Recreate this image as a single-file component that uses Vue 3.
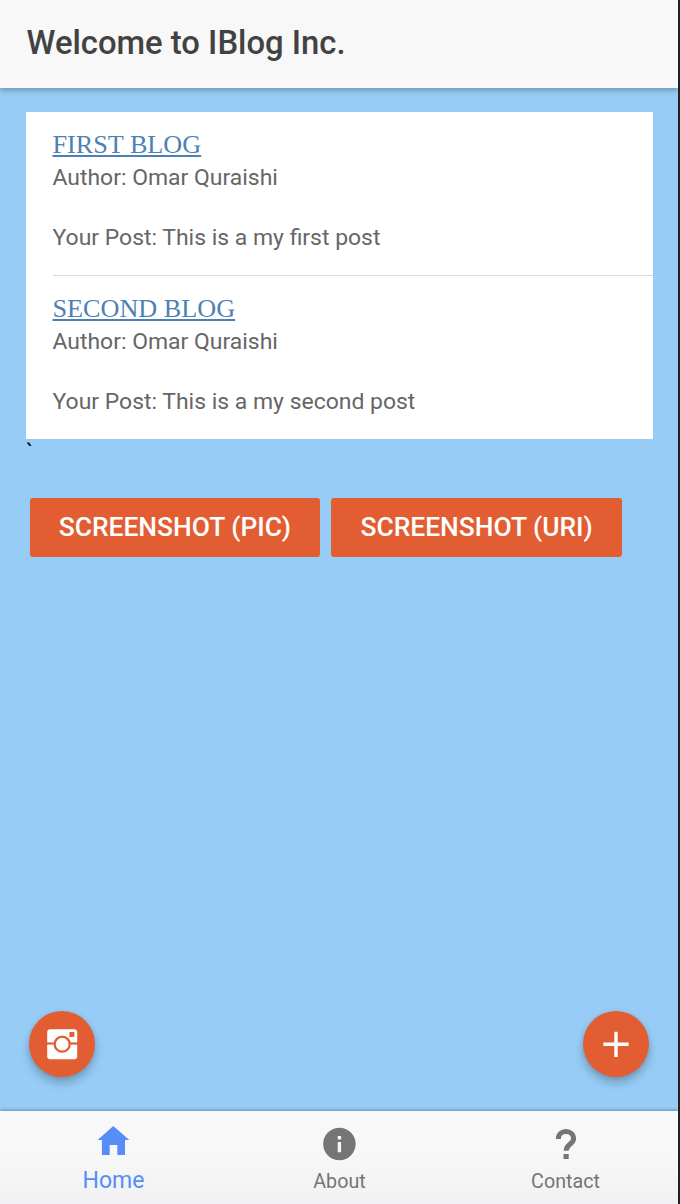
<script setup>
const posts = [
  { title: 'FIRST BLOG', author: 'Omar Quraishi', body: 'This is a my first post' },
  { title: 'SECOND BLOG', author: 'Omar Quraishi', body: 'This is a my second post' },
]
</script>

<template>
  <div class="screen">
    <header class="header">
      <h1>Welcome to IBlog Inc.</h1>
    </header>

    <main class="content">
      <div class="list">
        <article v-for="post in posts" :key="post.title" class="item">
          <div class="item-inner">
            <a class="title">{{ post.title }}</a>
            <p>Author: {{ post.author }}</p>
            <p class="body">Your Post: {{ post.body }}</p>
          </div>
        </article>
      </div>
      <div class="tick">`</div>
      <div class="buttons">
        <button class="btn">SCREENSHOT (PIC)</button>
        <button class="btn">SCREENSHOT (URI)</button>
      </div>
      <div class="fabs">
        <button class="fab" aria-label="Camera">
          <svg width="66" height="66" viewBox="0 0 66 66">
            <rect x="18.2" y="18.2" width="30" height="30" rx="3" fill="#fff" />
            <rect x="17" y="31.4" width="32" height="2.2" fill="#e25e32" />
            <circle cx="33.2" cy="33.2" r="7.5" fill="#fff" stroke="#e25e32" stroke-width="2.3" />
            <rect x="40.4" y="21" width="5" height="5" rx="0.6" fill="#e25e32" />
          </svg>
        </button>
        <button class="fab" aria-label="Add">
          <svg width="66" height="66" viewBox="0 0 66 66">
            <path d="M20.4 33.2H45.6M33 20.7V45.9" stroke="#fff" stroke-width="3.4" fill="none" />
          </svg>
        </button>
      </div>
    </main>

    <nav class="tabs">
      <a class="tab active">
        <svg width="40" height="40" viewBox="0 0 40 40">
          <path d="M19.3 5 35.3 19H31V34H23.3V24H15.7V34H7.9V19H3.6Z" fill="currentColor" />
        </svg>
        <span>Home</span>
      </a>
      <a class="tab">
        <svg width="40" height="40" viewBox="0 0 40 40">
          <circle cx="19.4" cy="23" r="16.2" fill="currentColor" />
          <path d="M17.7 15H21.1V18.5H17.7ZM17.7 21H21.1V31.3H17.7Z" fill="#f7f7f7" />
        </svg>
        <span>About</span>
      </a>
      <a class="tab">
        <svg width="40" height="40" viewBox="0 0 40 40">
          <path d="M12.3 18C12.3 13.3 15.5 10.6 20 10.6S27.6 13.3 27.6 17.8C27.6 23 20.1 23.2 20.1 29.8" stroke="currentColor" stroke-width="5" fill="none" />
          <path d="M17.5 33H22.7V38H17.5Z" fill="currentColor" />
        </svg>
        <span>Contact</span>
      </a>
    </nav>
  </div>
</template>

<style>
body {
  background: #212024;
}
</style>

<style scoped>
.screen {
  width: 678px;
  height: 1204px;
  display: flex;
  flex-direction: column;
  background: #96ccf6;
  font-family: Roboto, sans-serif;
  overflow: hidden;
}
.header {
  height: 88px;
  flex: none;
  box-sizing: border-box;
  padding: 23px 26px 0 26.5px;
  background: #f8f8f8;
  box-shadow: 0 2px 6px rgba(0, 0, 0, 0.3);
}
h1 {
  margin: 0;
  font-size: 32.8px;
  line-height: 40px;
  font-weight: 500;
  color: #424242;
  white-space: nowrap;
}
.content {
  flex: 1;
  display: flex;
  flex-direction: column;
  padding: 24px 25px 34px 26px;
}
.list {
  background: #fff;
  height: 327px;
}
.item {
  height: 164px;
  padding-left: 26.5px;
}
.item-inner {
  height: 162.5px;
  padding-top: 16px;
  box-sizing: border-box;
}
.item:first-child .item-inner {
  height: 164px;
  border-bottom: 1.5px solid #dadada;
}
.title {
  display: block;
  margin-bottom: 1px;
  font: 26.2px/33px "Liberation Serif", serif;
  color: #4e81b3;
  text-decoration: underline;
  text-decoration-thickness: 1.5px;
  text-underline-offset: 2px;
}
p {
  margin: 0;
  font-size: 22.95px;
  line-height: 32px;
  color: #666;
}
.body {
  margin-top: 28px;
}
.tick {
  height: 59px;
  font-size: 23px;
  line-height: 29px;
  color: #000;
}
.buttons {
  display: flex;
  gap: 11.5px;
  padding-left: 3.7px;
}
.btn {
  width: 290.3px;
  height: 59px;
  border: 0;
  border-radius: 3px;
  padding: 0;
  background: #e25e32;
  color: #fff;
  font: 500 26.4px/59px Roboto, sans-serif;
}
.fabs {
  display: flex;
  justify-content: space-between;
  margin-top: auto;
  padding: 0 3.8px 0 3.3px;
}
.fab {
  width: 66px;
  height: 66px;
  padding: 0;
  border: 0;
  border-radius: 50%;
  background: #e25e32;
  box-shadow: 0 6px 10px rgba(0, 0, 0, 0.22), 0 1px 4px rgba(0, 0, 0, 0.1);
}
.fab svg {
  display: block;
}
.tabs {
  height: 93px;
  flex: none;
  display: flex;
  background: linear-gradient(#f8f8f8 45%, #f1f1f3);
  box-shadow: 0 -1px 3px rgba(0, 0, 0, 0.3);
}
.tab {
  flex: 1;
  display: flex;
  flex-direction: column;
  align-items: center;
  padding: 10px 0 0 1px;
  color: #757575;
  font-size: 19.7px;
  line-height: 24px;
}
.tab span {
  margin-top: 9px;
}
.active {
  color: #568df8;
  font-size: 23px;
}
.active span {
  margin-top: 8px;
}
</style>
